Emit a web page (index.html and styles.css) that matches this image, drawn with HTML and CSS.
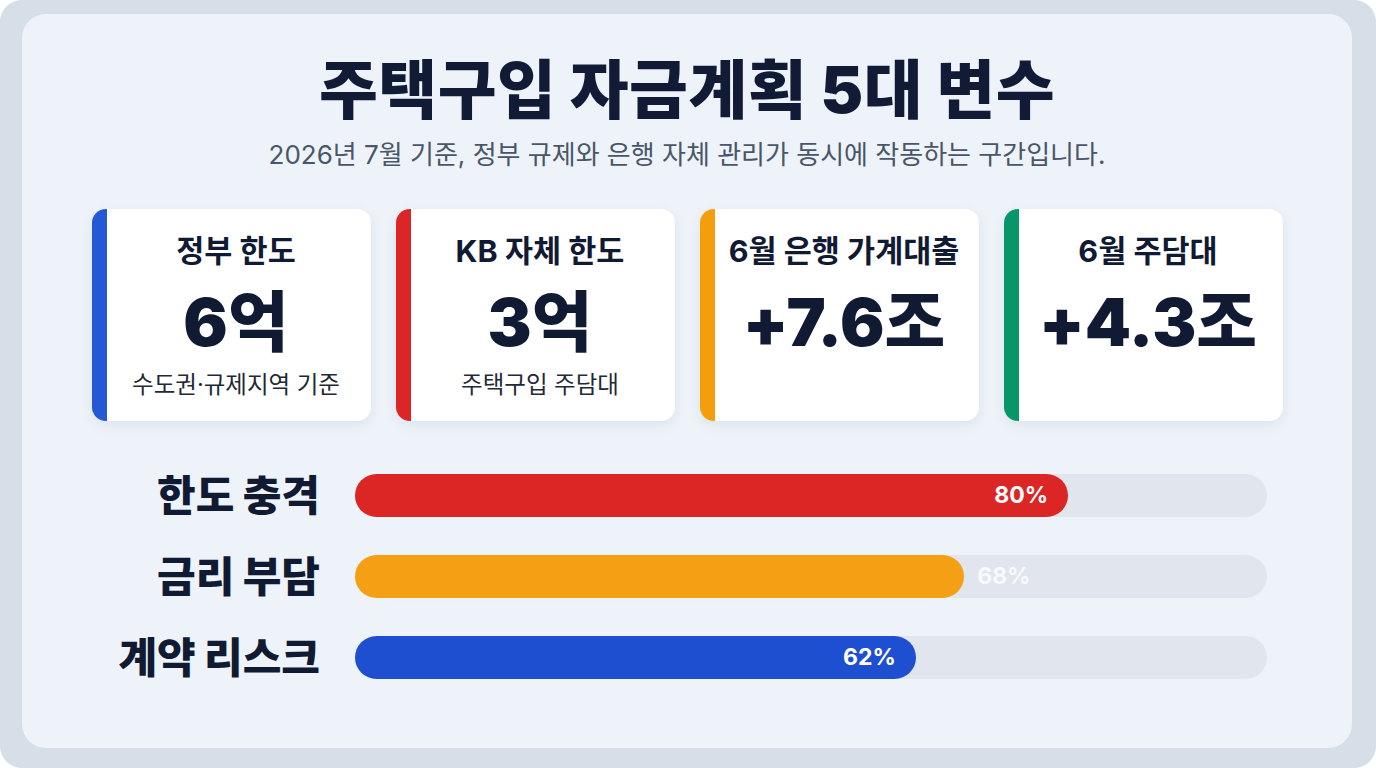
FILE: index.html
```html
<!DOCTYPE html>
<html lang="ko">
<head>
<meta charset="utf-8">
<title>주택구입 자금계획 5대 변수</title>
<link rel="stylesheet" href="styles.css">
</head>
<body>
<div class="frame">
  <main class="panel">
    <h1 class="title">주택구입 자금계획 5대 변수</h1>
    <p class="subtitle">2026년 7월 기준, 정부 규제와 은행 자체 관리가 동시에 작동하는 구간입니다.</p>

    <section class="cards">
      <div class="card card-blue">
        <div class="card-title">정부 한도</div>
        <div class="card-value">6억</div>
        <div class="card-note">수도권·규제지역 기준</div>
      </div>
      <div class="card card-red">
        <div class="card-title">KB 자체 한도</div>
        <div class="card-value">3억</div>
        <div class="card-note">주택구입 주담대</div>
      </div>
      <div class="card card-orange">
        <div class="card-title">6월 은행 가계대출</div>
        <div class="card-value">+7.6조</div>
      </div>
      <div class="card card-green">
        <div class="card-title">6월 주담대</div>
        <div class="card-value">+4.3조</div>
      </div>
    </section>

    <section class="bars">
      <div class="bar-label">한도 충격</div>
      <div class="track">
        <div class="fill fill-red" style="width: 78.2%"><span class="pct">80%</span></div>
      </div>

      <div class="bar-label">금리 부담</div>
      <div class="track">
        <div class="fill fill-orange" style="width: 66.8%"></div>
        <span class="pct pct-out">68%</span>
      </div>

      <div class="bar-label">계약 리스크</div>
      <div class="track">
        <div class="fill fill-blue" style="width: 61.5%"><span class="pct">62%</span></div>
      </div>
    </section>
  </main>
</div>
</body>
</html>
```

FILE: styles.css
```css
* {
  box-sizing: border-box;
}

html, body {
  margin: 0;
  padding: 0;
  background: #ffffff;
}

body {
  width: 1376px;
  height: 768px;
  overflow: hidden;
  font-family: Inter, "Noto Sans CJK KR", "Noto Sans", sans-serif;
  color: #111a33;
}

.frame {
  width: 1376px;
  height: 768px;
  background: #d6dee8;
  border-radius: 22px;
  padding: 14px 24px 20px 22px;
}

.panel {
  width: 1330px;
  height: 734px;
  background: #eef3f9;
  border-radius: 24px;
  padding-top: 40px;
  display: flex;
  flex-direction: column;
  align-items: stretch;
}

.title {
  margin: 0;
  text-align: center;
  font-size: 64px;
  line-height: 72px;
  font-weight: 900;
  color: #111b36;
  letter-spacing: 0.5px;
}

.subtitle {
  margin: 13px 0 0;
  text-align: center;
  font-size: 26px;
  line-height: 32px;
  font-weight: 400;
  color: #4a5668;
}

.cards {
  margin-top: 38px;
  padding: 0 69px 0 70px;
  display: grid;
  grid-template-columns: repeat(4, 279px);
  column-gap: 25px;
}

.card {
  height: 212px;
  background: #ffffff;
  border-radius: 14px;
  border-left: 15px solid #2458d6;
  box-shadow: 0 4px 14px rgba(30, 50, 90, 0.08);
  padding: 24px 6px 0 0;
  display: flex;
  flex-direction: column;
  align-items: center;
}

.card-blue { border-left-color: #2458d6; }
.card-red { border-left-color: #dc2626; }
.card-orange { border-left-color: #f59e0b; }
.card-green { border-left-color: #069669; }

.card-title {
  font-size: 30.5px;
  line-height: 36px;
  font-weight: 700;
  color: #111a33;
  white-space: nowrap;
}

.card-value {
  margin-top: 15px;
  font-size: 66px;
  line-height: 76px;
  font-weight: 900;
  color: #111a33;
  white-space: nowrap;
}

.card-note {
  margin-top: 10px;
  font-size: 23.5px;
  line-height: 30px;
  font-weight: 400;
  color: #1f2937;
  white-space: nowrap;
}

.bars {
  margin-top: 53px;
  padding-left: 66px;
  display: grid;
  grid-template-columns: 232px 912px;
  column-gap: 35px;
  row-gap: 38px;
  align-items: center;
}

.bar-label {
  text-align: right;
  font-size: 42px;
  line-height: 43px;
  font-weight: 900;
  color: #111a33;
  white-space: nowrap;
}

.track {
  position: relative;
  height: 43px;
  background: #e1e6ee;
  border-radius: 22px;
  display: flex;
  align-items: center;
}

.fill {
  height: 43px;
  border-radius: 22px;
  display: flex;
  align-items: center;
  justify-content: flex-end;
  padding-right: 20px;
}

.fill-red { background: #dc2626; }
.fill-orange { background: #f59f14; }
.fill-blue { background: #1f4fd1; }

.pct {
  font-size: 23px;
  font-weight: 700;
  color: #ffffff;
  line-height: 1;
}

.pct-out {
  margin-left: 13px;
  color: #f8fafc;
}
```
